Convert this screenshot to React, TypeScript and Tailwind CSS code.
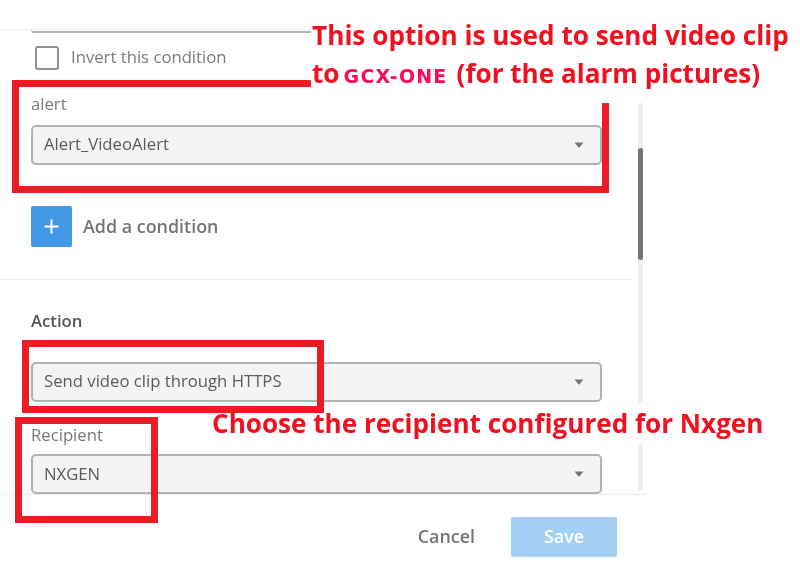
const Caret = () => (
  <svg width="10" height="6" viewBox="0 0 10 6" className="shrink-0">
    <path d="M0.5 0.5 H9.5 L5.6 5.2 Q5 5.8 4.4 5.2 Z" fill="#757575" />
  </svg>
);

const Select = ({ value, className = "", textClass = "mb-[2px]" }: { value: string; className?: string; textClass?: string }) => (
  <div
    className={`flex h-10 items-center justify-between rounded-[5px] border-2 border-[#b2b2b2] bg-[#f4f4f4] pl-[11px] pr-[16px] text-[16.7px] text-[#5c5c5c] ${className}`}
  >
    <span className={textClass}>{value}</span>
    <Caret />
  </div>
);

export default function App() {
  return (
    <div className="relative h-[586px] w-[800px] overflow-hidden bg-white font-['Open_Sans',sans-serif] blur-[0.4px]">
      {/* dialog */}
      <div className="w-[646px]">
        <div className="flex h-[495px] border-b border-[#ececec]">
          <div className="w-[632px] shrink-0">
            <div className="h-[30px] border-b border-[#f1f1f1]" />
            <div className="ml-[31px] mr-[30px] h-[3px] rounded-b-[3px] border-b-2 border-[#b2b2b2]" />

            <div className="ml-[35px] mt-[13px] flex h-6 items-center gap-3">
              <div className="h-6 w-6 rounded-[3px] border-2 border-[#909090] bg-white" />
              <span className="mb-[2px] text-[16.7px] text-[#7b7b7b]">Invert this condition</span>
            </div>

            <div className="ml-[31px] mr-[30px] mt-[23px]">
              <div className="h-[22px] text-[16.7px] leading-[22px] text-[#7b7b7b]">alert</div>
              <Select value="Alert_VideoAlert" className="mt-[10px]" />
            </div>

            <div className="ml-[31px] mt-[41px] flex items-center gap-[11px]">
              <div className="flex h-[41px] w-[41px] items-center justify-center rounded-[2px] bg-[#4399e6]">
                <svg width="15" height="15" viewBox="0 0 15 15">
                  <path d="M7.5 0.5 V14.5 M0.5 7.5 H14.5" stroke="#fff" strokeWidth="2" />
                </svg>
              </div>
              <span className="text-[17.9px] font-semibold text-[#757575]">Add a condition</span>
            </div>

            <div className="mt-[32px] h-px bg-[#ececec]" />

            <div className="ml-[31px] mr-[30px] mt-[30px]">
              <div className="h-[22px] text-[16.7px] font-semibold leading-[22px] text-[#555555]">Action</div>
              <Select value="Send video clip through HTTPS" className="mt-[30px]" />
              <div className="mt-[22px] h-[22px] text-[16.7px] leading-[22px] text-[#7b7b7b]">Recipient</div>
              <Select value="NXGEN" className="mt-2" textClass="mb-0" />
            </div>
          </div>

          {/* scrollbar */}
          <div className="ml-[6px] h-[490px] w-[5px] bg-[#efefef]">
            <div className="mt-[148px] h-[112px] rounded-[3px] bg-[#757575]" />
          </div>
        </div>

        <div className="flex items-center justify-end gap-[36px] pr-[29px] pt-[22px]">
          <span className="mb-[2px] text-[17.9px] font-semibold text-[#757575]">Cancel</span>
          <div className="flex h-10 w-[106px] items-center justify-center rounded-[2px] bg-[#a5cff3] pb-[2px] text-[17.9px] font-semibold text-white">
            Save
          </div>
        </div>
      </div>

      {/* annotations over the screenshot */}
      <div className="absolute left-[12px] top-[80px] h-[113px] w-[597px] border-[7px] border-[#ed1c24]" />

      <div className="absolute left-[311px] top-0 h-[103px] w-[489px] bg-white pl-[1px] pt-[16px] text-[26.2px] font-[660] leading-[38px] text-[#f0101f]">
        <div className="whitespace-nowrap">This option is used to send video clip</div>
        <div className="flex items-baseline whitespace-nowrap">
          <span>to</span>
          <span className="ml-[4px] mr-[9px] font-['DejaVu_Sans',sans-serif] text-[19px] font-bold tracking-[1.2px] text-[#ff0a54]">
            GCX-ONE
          </span>
          <span className="text-[26.1px]">(for the alarm pictures)</span>
        </div>
      </div>

      <div className="absolute left-[211px] top-[403px] h-[41px] w-[589px] bg-white pl-[1px] pt-[1px] text-[26.1px] font-[660] leading-[38px] text-[#f0101f]">
        <span className="whitespace-nowrap">Choose the recipient configured for Nxgen</span>
      </div>

      <div className="absolute left-[22px] top-[340px] h-[73px] w-[302px] border-[7px] border-[#ed1c24]" />
      <div className="absolute left-[15px] top-[417px] h-[106px] w-[143px] border-[7px] border-[#ed1c24]" />
    </div>
  );
}
